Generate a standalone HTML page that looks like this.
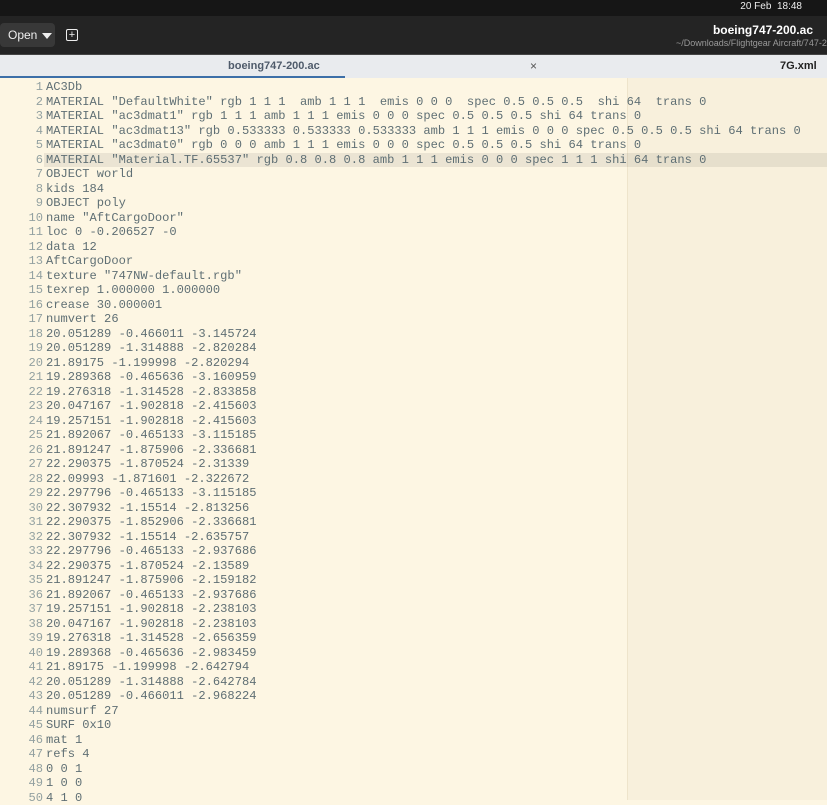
<!DOCTYPE html>
<html><head><style>
body{margin:0;width:827px;height:800px;overflow:hidden;background:#fdf6e3;font-family:"Liberation Sans",sans-serif;position:relative}
.top{position:absolute;left:0;top:0;width:827px;height:16px;background:#161616;color:#eee;font-size:10px}
.hdr{position:absolute;left:0;top:16px;width:827px;height:38px;background:#242424;color:#eee}
.open{position:absolute;left:0;top:23px;width:55px;height:24px;background:#383838;border-radius:4px;font-size:12px;line-height:24px;padding-left:8px;box-sizing:border-box;color:#eee;white-space:nowrap}
.arr{position:absolute;left:42px;top:10px;width:0;height:0;border-left:5px solid transparent;border-right:5px solid transparent;border-top:6px solid #eee}
.tabs{position:absolute;left:0;top:54px;width:827px;height:24px;background:#e9ebee;border-top:1px solid #444;font-size:11px;font-weight:bold}
.ed{position:absolute;left:0;top:78px;width:827px;height:722px;background:#fdf6e3}
.mar{position:absolute;left:627px;top:78px;width:200px;height:722px;background:#f8f0dc;border-left:1px solid #eee4cb}
.code{position:absolute;left:0;top:80px;font-family:"Liberation Mono",monospace;font-size:12.1px;line-height:14.5px;color:#5f6f74;white-space:pre}
.l{display:block;height:14.5px}
.n{display:inline-block;width:43px;margin-right:3px;text-align:right;color:#93a1a1}
.hl{position:absolute;left:44px;top:152.5px;width:783px;height:14.5px;background:rgba(0,0,0,0.07)}
</style></head><body>
<div class="top"><span style="position:absolute;right:25px;top:1px">20 Feb&nbsp; 18:48</span></div>
<div class="hdr"></div>
<div class="open">Open<span class="arr"></span></div>
<div style="position:absolute;left:66px;top:29px;width:10px;height:10px;border:1.5px solid #eee;border-radius:2px;color:#eee;font-size:11px;line-height:10px;text-align:center">+</div>
<div style="position:absolute;right:14px;top:23px;color:#fff;font-size:12px;font-weight:bold">boeing747-200.ac</div>
<div style="position:absolute;left:676px;top:38px;color:#999;font-size:9px;white-space:nowrap">~/Downloads/Flightgear Aircraft/747-200</div>
<div class="tabs">
<span style="position:absolute;left:228px;top:5px;color:#4f5b6b">boeing747-200.ac</span>
<span style="position:absolute;left:530px;top:4px;color:#555;font-weight:normal;font-size:12px">×</span>
<span style="position:absolute;left:0;top:21px;width:345px;height:2px;background:#3d6fa8"></span>
<span style="position:absolute;left:780px;top:5px;color:#222">7G.xml</span>
</div>
<div class="ed"></div><div class="mar"></div>
<div class="hl"></div>
<div class="code"><span class="l"><span class="n">1</span>AC3Db</span><span class="l"><span class="n">2</span>MATERIAL "DefaultWhite" rgb 1 1 1  amb 1 1 1  emis 0 0 0  spec 0.5 0.5 0.5  shi 64  trans 0</span><span class="l"><span class="n">3</span>MATERIAL "ac3dmat1" rgb 1 1 1 amb 1 1 1 emis 0 0 0 spec 0.5 0.5 0.5 shi 64 trans 0</span><span class="l"><span class="n">4</span>MATERIAL "ac3dmat13" rgb 0.533333 0.533333 0.533333 amb 1 1 1 emis 0 0 0 spec 0.5 0.5 0.5 shi 64 trans 0</span><span class="l"><span class="n">5</span>MATERIAL "ac3dmat0" rgb 0 0 0 amb 1 1 1 emis 0 0 0 spec 0.5 0.5 0.5 shi 64 trans 0</span><span class="l"><span class="n">6</span>MATERIAL "Material.TF.65537" rgb 0.8 0.8 0.8 amb 1 1 1 emis 0 0 0 spec 1 1 1 shi 64 trans 0</span><span class="l"><span class="n">7</span>OBJECT world</span><span class="l"><span class="n">8</span>kids 184</span><span class="l"><span class="n">9</span>OBJECT poly</span><span class="l"><span class="n">10</span>name "AftCargoDoor"</span><span class="l"><span class="n">11</span>loc 0 -0.206527 -0</span><span class="l"><span class="n">12</span>data 12</span><span class="l"><span class="n">13</span>AftCargoDoor</span><span class="l"><span class="n">14</span>texture "747NW-default.rgb"</span><span class="l"><span class="n">15</span>texrep 1.000000 1.000000</span><span class="l"><span class="n">16</span>crease 30.000001</span><span class="l"><span class="n">17</span>numvert 26</span><span class="l"><span class="n">18</span>20.051289 -0.466011 -3.145724</span><span class="l"><span class="n">19</span>20.051289 -1.314888 -2.820284</span><span class="l"><span class="n">20</span>21.89175 -1.199998 -2.820294</span><span class="l"><span class="n">21</span>19.289368 -0.465636 -3.160959</span><span class="l"><span class="n">22</span>19.276318 -1.314528 -2.833858</span><span class="l"><span class="n">23</span>20.047167 -1.902818 -2.415603</span><span class="l"><span class="n">24</span>19.257151 -1.902818 -2.415603</span><span class="l"><span class="n">25</span>21.892067 -0.465133 -3.115185</span><span class="l"><span class="n">26</span>21.891247 -1.875906 -2.336681</span><span class="l"><span class="n">27</span>22.290375 -1.870524 -2.31339</span><span class="l"><span class="n">28</span>22.09993 -1.871601 -2.322672</span><span class="l"><span class="n">29</span>22.297796 -0.465133 -3.115185</span><span class="l"><span class="n">30</span>22.307932 -1.15514 -2.813256</span><span class="l"><span class="n">31</span>22.290375 -1.852906 -2.336681</span><span class="l"><span class="n">32</span>22.307932 -1.15514 -2.635757</span><span class="l"><span class="n">33</span>22.297796 -0.465133 -2.937686</span><span class="l"><span class="n">34</span>22.290375 -1.870524 -2.13589</span><span class="l"><span class="n">35</span>21.891247 -1.875906 -2.159182</span><span class="l"><span class="n">36</span>21.892067 -0.465133 -2.937686</span><span class="l"><span class="n">37</span>19.257151 -1.902818 -2.238103</span><span class="l"><span class="n">38</span>20.047167 -1.902818 -2.238103</span><span class="l"><span class="n">39</span>19.276318 -1.314528 -2.656359</span><span class="l"><span class="n">40</span>19.289368 -0.465636 -2.983459</span><span class="l"><span class="n">41</span>21.89175 -1.199998 -2.642794</span><span class="l"><span class="n">42</span>20.051289 -1.314888 -2.642784</span><span class="l"><span class="n">43</span>20.051289 -0.466011 -2.968224</span><span class="l"><span class="n">44</span>numsurf 27</span><span class="l"><span class="n">45</span>SURF 0x10</span><span class="l"><span class="n">46</span>mat 1</span><span class="l"><span class="n">47</span>refs 4</span><span class="l"><span class="n">48</span>0 0 1</span><span class="l"><span class="n">49</span>1 0 0</span><span class="l"><span class="n">50</span>4 1 0</span></div>
</body></html>
